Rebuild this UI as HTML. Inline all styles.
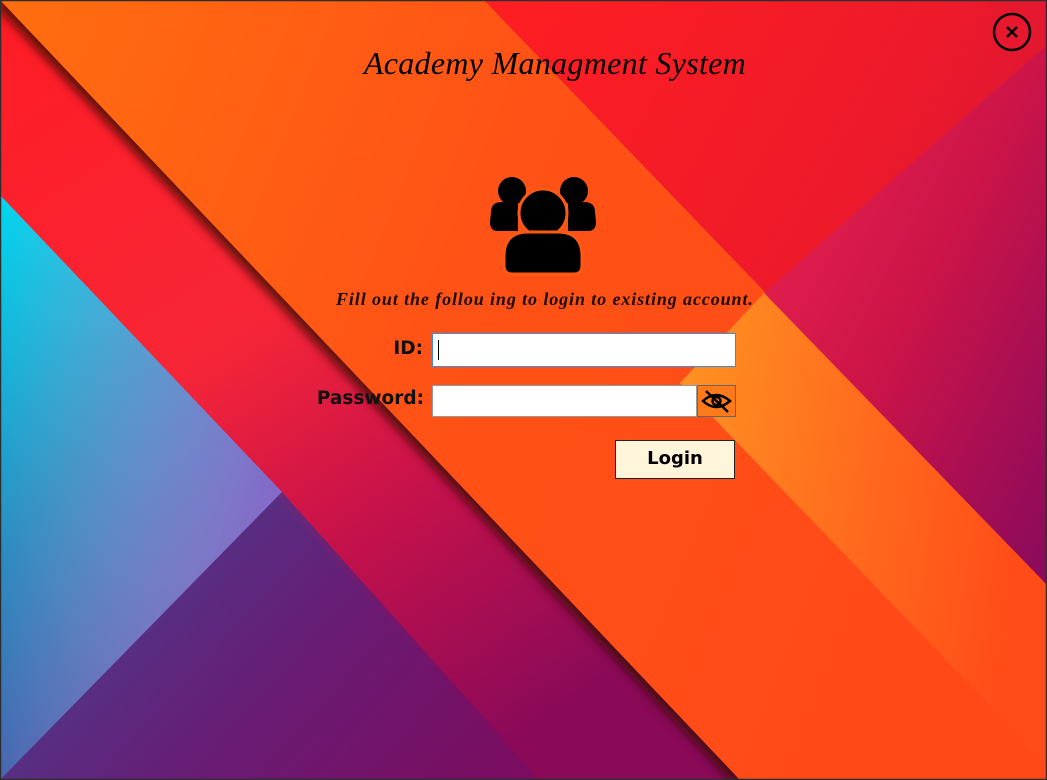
<!DOCTYPE html>
<html><head><meta charset="utf-8"><style>
html,body{margin:0;padding:0;}
body{width:1047px;height:780px;position:relative;overflow:hidden;font-family:"Liberation Sans",sans-serif;}
#bg{position:absolute;left:0;top:0;}
.abs{position:absolute;}
.title{left:0;width:1110px;top:45px;text-align:center;font-family:"Liberation Serif",serif;font-style:italic;font-size:32px;color:#000;letter-spacing:0.3px;}
.sub{left:336px;top:289px;font-family:"Liberation Serif",serif;font-style:italic;font-weight:bold;font-size:18px;color:#1a0a00;letter-spacing:0.9px;white-space:nowrap;}
.lbl{font-family:"DejaVu Sans",sans-serif;font-weight:bold;font-size:18.5px;color:#111;text-align:right;}
.inp{background:#fff;box-sizing:border-box;}
</style></head><body>
<svg id="bg" width="1047" height="780" viewBox="0 0 1047 780">
<defs>
<linearGradient id="pur" x1="0" y1="0.5" x2="1" y2="1"><stop offset="0" stop-color="#4a3c8e"/><stop offset="0.5" stop-color="#6a1a72"/><stop offset="1" stop-color="#7e0a5c"/></linearGradient>
<linearGradient id="red" x1="0" y1="0" x2="0.6" y2="1"><stop offset="0" stop-color="#ff1c24"/><stop offset="0.45" stop-color="#f72636"/><stop offset="0.7" stop-color="#c8124a"/><stop offset="1" stop-color="#8a0a58"/></linearGradient>
<linearGradient id="cyan" x1="0" y1="0" x2="0.6" y2="1"><stop offset="0" stop-color="#00d6ee"/><stop offset="0.45" stop-color="#2a8cc0"/><stop offset="0.75" stop-color="#4a64b0"/><stop offset="1" stop-color="#5a4a9e"/></linearGradient>
<linearGradient id="cyan2" x1="0" y1="0" x2="1" y2="0"><stop offset="0" stop-color="#fff" stop-opacity="0"/><stop offset="1" stop-color="#b070e0" stop-opacity="0.55"/></linearGradient>
<linearGradient id="org" x1="0" y1="0" x2="1" y2="0.3"><stop offset="0" stop-color="#ff6e10"/><stop offset="0.5" stop-color="#ff5216"/><stop offset="1" stop-color="#ff4a18"/></linearGradient>
<linearGradient id="tr" x1="0" y1="0" x2="1" y2="0.6"><stop offset="0" stop-color="#ff1e22"/><stop offset="0.6" stop-color="#ee1a2a"/><stop offset="1" stop-color="#d0143a"/></linearGradient>
<linearGradient id="pink" x1="0" y1="0" x2="1" y2="1"><stop offset="0" stop-color="#f02650"/><stop offset="0.5" stop-color="#cc1448"/><stop offset="1" stop-color="#880a5c"/></linearGradient>
<linearGradient id="lo" x1="0" y1="0" x2="1" y2="0.2"><stop offset="0" stop-color="#ff9422"/><stop offset="0.5" stop-color="#ff6e1e"/><stop offset="1" stop-color="#ff4c18"/></linearGradient>
<filter id="blur" x="-10%" y="-10%" width="120%" height="120%"><feGaussianBlur stdDeviation="5"/></filter>
<clipPath id="redclip"><polygon points="0,0 740,780 536,780 0,195"/></clipPath>
</defs>
<rect width="1047" height="780" fill="url(#pur)"/>
<polygon points="0,0 740,780 536,780 0,195" fill="url(#red)"/>
<polygon points="0,195 282,492 0,780" fill="url(#cyan)"/>
<polygon points="0,195 282,492 0,780" fill="url(#cyan2)"/>
<polygon points="0,780 282,492 540,780" fill="url(#pur)" opacity="0.9"/>
<g clip-path="url(#redclip)"><line x1="0" y1="0" x2="740" y2="780" stroke="#3a0c00" stroke-width="14" opacity="0.85" filter="url(#blur)"/></g>
<polygon points="0,0 484,0 1047,585 1047,780 740,780" fill="url(#org)"/>
<polygon points="484,0 1047,0 1047,585" fill="url(#tr)"/>
<polygon points="1047,45 764,293 1047,585" fill="url(#pink)"/>
<polygon points="764,293 1047,585 1047,765 680,383" fill="url(#lo)"/>
<rect x="0.5" y="0.5" width="1046" height="779" fill="none" stroke="#2e2e2e" stroke-width="1.5"/>
</svg>

<div class="abs title">Academy Managment System</div>

<svg class="abs" style="left:488px;top:174px" width="110" height="102" viewBox="0 0 110 102">
<circle cx="24" cy="17" r="14" fill="#000"/>
<circle cx="86" cy="17" r="14" fill="#000"/>
<path d="M3 38 Q3 28 14 28 L30 30 L30 57 L10 57 Q2 57 2 48 Z" fill="#000"/>
<path d="M107 38 Q107 28 96 28 L80 30 L80 57 L100 57 Q108 57 108 48 Z" fill="#000"/>
<circle cx="55" cy="39" r="24" fill="#000" stroke="#ff5a14" stroke-width="3"/>
<path d="M16 92 L16 82 Q16 58 40 58 L70 58 Q94 58 94 82 L94 92 Q94 100 86 100 L24 100 Q16 100 16 92 Z" fill="#000" stroke="#ff5a14" stroke-width="3"/>
</svg>

<div class="abs sub">Fill out the follou ing to login to existing account.</div>

<div class="abs lbl" style="left:300px;top:338px;width:123px;">ID:</div>
<div class="abs inp" style="left:432px;top:333px;width:304px;height:34px;border:1px solid #3a8ee0;"><div style="position:absolute;left:5px;top:6px;width:1px;height:20px;background:#000;"></div></div>

<div class="abs lbl" style="left:290px;top:388px;width:134px;">Password:</div>
<div class="abs inp" style="left:432px;top:385px;width:265px;height:32px;border:1px solid #999;"></div>
<div class="abs" style="left:697px;top:385px;width:39px;height:32px;box-sizing:border-box;border:1px solid #666;background:#ff7a1a;">
<svg width="37" height="30" viewBox="0 0 37 30"><path d="M5 15 Q18 3 32 15 Q18 27 5 15 Z" fill="none" stroke="#000" stroke-width="2.5"/><circle cx="18.5" cy="15" r="4" fill="none" stroke="#000" stroke-width="2.5"/><line x1="8" y1="5" x2="30" y2="26" stroke="#000" stroke-width="2.5"/></svg>
</div>

<div class="abs" style="left:615px;top:440px;width:120px;height:39px;box-sizing:border-box;border:1.5px solid #222;background:#fff5da;text-align:center;line-height:36px;font-family:'DejaVu Sans',sans-serif;font-weight:bold;font-size:18px;color:#000;">Login</div>

<svg class="abs" style="left:992px;top:12px" width="40" height="40" viewBox="0 0 40 40"><circle cx="20" cy="20" r="18" fill="none" stroke="#000" stroke-width="2.5"/><path d="M15 15 L25 25 M25 15 L15 25" stroke="#000" stroke-width="2.5"/></svg>
</body></html>
